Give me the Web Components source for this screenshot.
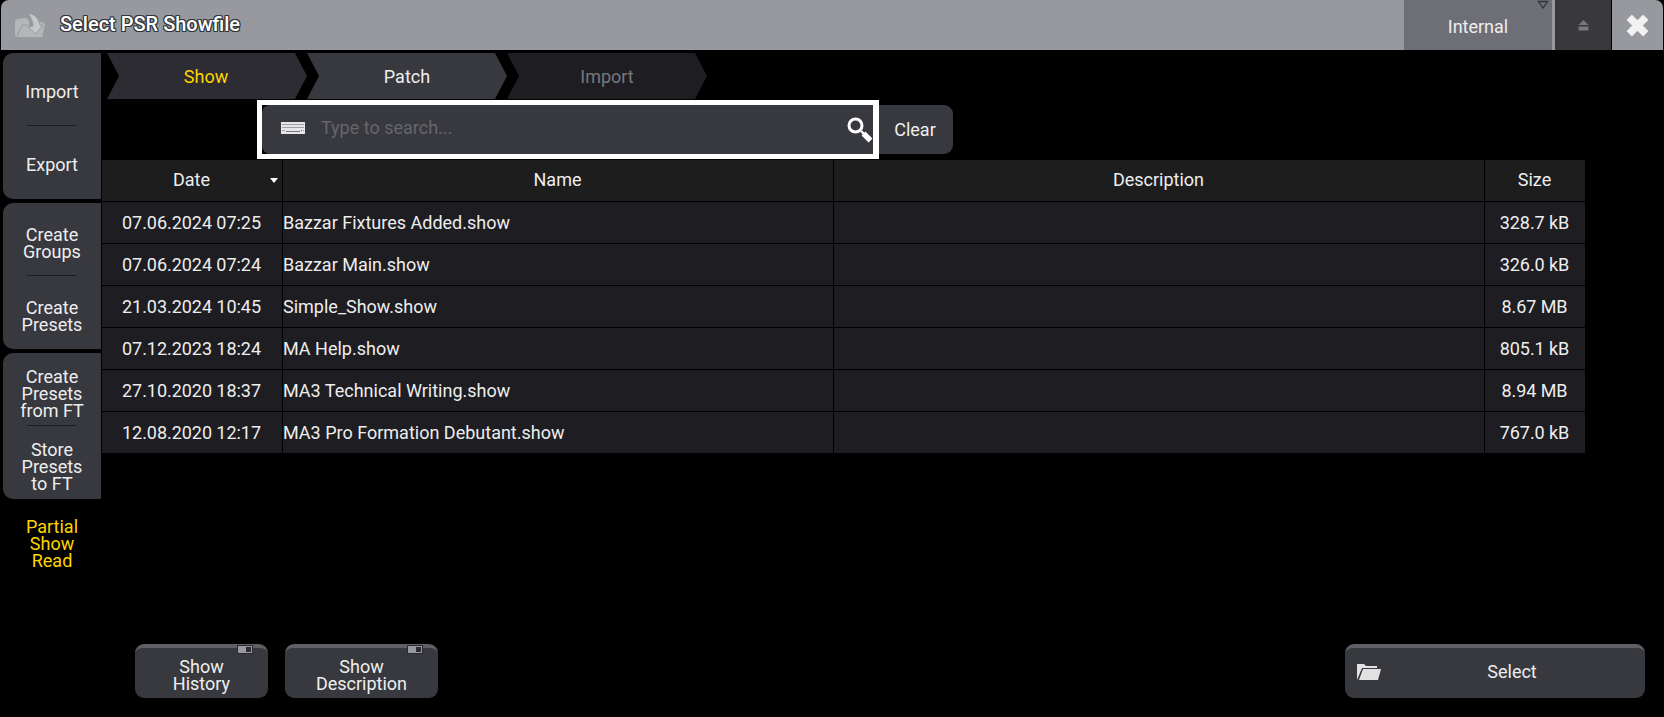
<!DOCTYPE html>
<html>
<head>
<meta charset="utf-8">
<title>Select PSR Showfile</title>
<style>
    html, body { margin: 0; background: #000; }
    body { font-family: Roboto, "Liberation Sans", sans-serif; font-size: 18px; color: #eee; }
</style>
</head>
<body>
<show-dialog>
    <title-bar slot="title" heading="Select PSR Showfile" drive="Internal"></title-bar>

    <side-group slot="side" style="--text-drop:4px">
        <side-button>Import</side-button>
        <side-button>Export</side-button>
    </side-group>
    <side-group slot="side" style="--text-drop:7px">
        <side-button>Create<br>Groups</side-button>
        <side-button>Create<br>Presets</side-button>
    </side-group>
    <side-group slot="side" style="--text-drop:7px">
        <side-button>Create<br>Presets<br>from FT</side-button>
        <side-button>Store<br>Presets<br>to FT</side-button>
    </side-group>
    <side-button slot="side" style="color:#ffd400;height:80px">Partial<br>Show<br>Read</side-button>

    <step-bar slot="steps">
        <step-item state="active">Show</step-item>
        <step-item>Patch</step-item>
        <step-item state="off">Import</step-item>
    </step-bar>

    <search-box slot="search"></search-box>
    <file-table slot="table"></file-table>

    <action-button slot="actions" toggle style="width:133px">Show<br>History</action-button>
    <action-button slot="actions" toggle style="width:153px;margin-left:17px">Show<br>Description</action-button>
    <action-button slot="actions" folder style="width:300px;margin-left:auto">Select</action-button>
</show-dialog>

<script>
const dialogTemplate = document.createElement('template');
dialogTemplate.innerHTML = `
<style>
    :host { display: flex; flex-flow: column nowrap; width: 1664px; height: 717px; overflow: hidden; background: #000; }
    .body { display: flex; flex: 1; min-height: 0; padding-top: 3px; }
    .side { display: flex; flex-flow: column nowrap; gap: 4px; width: 98px; margin-left: 3px; flex: none; }
    .main { display: flex; flex-flow: column nowrap; flex: 1; min-width: 0; padding-left: 1px; }
    .steps { display: block; padding-left: 5px; }
    .search { display: block; padding: 1px 0 1px 155px; }
    .actions { display: flex; margin-top: auto; padding: 0 19px 19px 33px; }
</style>
<slot name="title"></slot>
<div class="body">
    <div class="side"><slot name="side"></slot></div>
    <div class="main">
        <div class="steps"><slot name="steps"></slot></div>
        <div class="search"><slot name="search"></slot></div>
        <slot name="table"></slot>
        <div class="actions"><slot name="actions"></slot></div>
    </div>
</div>
`;
class ShowDialog extends HTMLElement {
    constructor() {
        super();
        this.attachShadow({ mode: 'open' }).appendChild(dialogTemplate.content.cloneNode(true));
    }
}
customElements.define('show-dialog', ShowDialog);

const titleTemplate = document.createElement('template');
titleTemplate.innerHTML = `
<style>
    :host { display: flex; align-items: stretch; height: 50px; background: #98999e; border-radius: 8px 8px 0 0; overflow: hidden; flex: none; margin: 0 1px; }
    .icon { width: 30px; height: 24px; margin: 13px 15px 0 14px; flex: none; }
    h1 { flex: 1; margin: 0; font: 500 20px/48px Roboto, sans-serif; color: #fff;
        text-shadow: -1px 0 #33343a, 1px 0 #33343a, 0 -1px #33343a, 0 1px #33343a, -1px -1px #33343a, 1px 1px #33343a, 1px -1px #33343a, -1px 1px #33343a; }
    .drive { position: relative; width: 148px; background: #6e6f76; color: #eee; text-align: center; line-height: 54px; flex: none; }
    .drive svg { position: absolute; right: 3px; top: 0; }
    .eject { width: 56px; margin-left: 3px; background: #38383d; display: flex; align-items: center; justify-content: center; flex: none; border-right: 1px solid #000; }
    .close { width: 51px; display: flex; align-items: center; justify-content: center; flex: none; }
</style>
<svg class="icon" viewBox="0 0 30 24">
    <path d="M0 9 Q0 7 2 6 L11 5 L14 8 V24 H2 Q0 24 0 22 Z" fill="#b5b6b9"/>
    <path d="M22 9 H27 L30 11 L27 24 H7 L11 13 H20 Z" fill="#b5b6b9"/>
    <path d="M2 23 L7 12 H13" fill="none" stroke="#98999e" stroke-width="1"/>
    <path d="M13 0 C19 1 24 5 25 12 L28 12 L21 21 L13 14 L18 13 C18 9 16 4 13 0 Z" fill="#c6c7c9" stroke="#98999e" stroke-width="1"/>
</svg>
<h1></h1>
<div class="drive"><span></span>
    <svg width="12" height="9" viewBox="0 0 12 9"><path d="M1.5 1.5 H10.5 L6 8 Z" fill="none" stroke="#33343a" stroke-width="1.3"/></svg>
</div>
<div class="eject"><svg width="11" height="11" viewBox="0 0 11 11"><path d="M5.5 0 L10.5 5 H.5 Z M.5 6.5 H10.5 V10.5 H.5 Z" fill="#77787d"/></svg></div>
<div class="close"><svg width="27" height="27" viewBox="0 0 24 24"><path d="M3 7 L7 3 L12 8 L17 3 L21 7 L16 12 L21 17 L17 21 L12 16 L7 21 L3 17 L8 12 Z" fill="#f2f2f2" stroke="#f2f2f2" stroke-width="1" stroke-linejoin="round"/></svg></div>
`;
class TitleBar extends HTMLElement {
    constructor() {
        super();
        this.attachShadow({ mode: 'open' }).appendChild(titleTemplate.content.cloneNode(true));
    }
    connectedCallback() {
        this.shadowRoot.querySelector('h1').textContent = this.getAttribute('heading');
        this.shadowRoot.querySelector('.drive span').textContent = this.getAttribute('drive');
    }
}
customElements.define('title-bar', TitleBar);

const groupTemplate = document.createElement('template');
groupTemplate.innerHTML = `
<style>
    :host { display: grid; grid-template-rows: 1fr 1fr; height: 146px; background: #38383f; border-radius: 10px 0 0 10px; flex: none; }
</style>
<slot></slot>
`;
class SideGroup extends HTMLElement {
    constructor() {
        super();
        this.attachShadow({ mode: 'open' }).appendChild(groupTemplate.content.cloneNode(true));
    }
}
customElements.define('side-group', SideGroup);

const sideButtonTemplate = document.createElement('template');
sideButtonTemplate.innerHTML = `
<style>
    :host { box-sizing: border-box; display: flex; align-items: center; justify-content: center; text-align: center; font-size: 18px; line-height: 17px; color: #eee; position: relative; padding-top: var(--text-drop, 0); }
    :host(:first-child)::after { content: ""; position: absolute; left: 24px; right: 25px; bottom: 0; height: 1px; background: #1c1c20; }
</style>
<div><slot></slot></div>
`;
class SideButton extends HTMLElement {
    constructor() {
        super();
        this.attachShadow({ mode: 'open' }).appendChild(sideButtonTemplate.content.cloneNode(true));
    }
}
customElements.define('side-button', SideButton);

const stepBarTemplate = document.createElement('template');
stepBarTemplate.innerHTML = `
<style>
    :host { display: flex; height: 46px; }
</style>
<slot></slot>
`;
class StepBar extends HTMLElement {
    constructor() {
        super();
        this.attachShadow({ mode: 'open' }).appendChild(stepBarTemplate.content.cloneNode(true));
    }
}
customElements.define('step-bar', StepBar);

const stepItemTemplate = document.createElement('template');
stepItemTemplate.innerHTML = `
<style>
    :host { box-sizing: border-box; display: flex; align-items: center; justify-content: center; width: 200px; height: 46px; background: #38383f; color: #eee; font-size: 18px;
        clip-path: polygon(0 0, 188px 0, 200px 23px, 188px 46px, 0 46px, 12px 23px); }
    :host([state="active"]) { background: #2c2c32; color: #ffd400; padding-right: 2px; }
    :host([state="off"]) { background: #1e1e22; color: #77777c; }
</style>
<slot></slot>
`;
class StepItem extends HTMLElement {
    constructor() {
        super();
        this.attachShadow({ mode: 'open' }).appendChild(stepItemTemplate.content.cloneNode(true));
    }
}
customElements.define('step-item', StepItem);

const searchTemplate = document.createElement('template');
searchTemplate.innerHTML = `
<style>
    :host { display: flex; align-items: center; height: 59px; }
    .field { box-sizing: border-box; width: 622px; height: 59px; background: #000; border: 5px solid #fff; border-right-width: 6px; flex: none; }
    .inner { display: flex; align-items: center; height: 100%; background: #38383f; border-radius: 8px 0 0 8px; }
    .kbd { margin: 0 0 3px 19px; flex: none; }
    .hint { margin: 0 0 5px 16px; flex: 1; color: #66666b; font-size: 18px; }
    .glass { margin: 0; flex: none; }
    .clear { display: flex; align-items: center; justify-content: center; box-sizing: border-box; width: 74px; height: 49px; padding: 0 2px 1px 0; background: #38383f; border-radius: 0 9px 9px 0; color: #eee; font-size: 18px; flex: none; }
</style>
<div class="field"><div class="inner">
    <svg class="kbd" width="24" height="12" viewBox="0 0 24 12">
        <rect width="24" height="12" fill="#e6e6e6"/>
        <path d="M1.5 2.5 H22.5 M1.5 5.5 H22.5" stroke="#5a5a60" stroke-width="1" stroke-dasharray="1 1"/>
        <path d="M1.5 8.5 H4 M20 8.5 H22.5" stroke="#5a5a60" stroke-width="1" stroke-dasharray="1 1"/>
        <path d="M5 9.5 H19" stroke="#77777c" stroke-width="1"/>
    </svg>
    <span class="hint">Type to search...</span>
    <svg class="glass" width="26" height="26" viewBox="0 0 26 26">
        <circle cx="8.5" cy="8.5" r="6.5" fill="none" stroke="#fff" stroke-width="3"/>
        <path d="M14 14 L17 17" stroke="#fff" stroke-width="2.4"/>
        <path d="M16.5 16.5 L23.5 23.5" stroke="#fff" stroke-width="5.5"/>
    </svg>
</div></div>
<div class="clear">Clear</div>
`;
class SearchBox extends HTMLElement {
    constructor() {
        super();
        this.attachShadow({ mode: 'open' }).appendChild(searchTemplate.content.cloneNode(true));
    }
}
customElements.define('search-box', SearchBox);

const files = [
    ['07.06.2024 07:25', 'Bazzar Fixtures Added.show', '328.7 kB'],
    ['07.06.2024 07:24', 'Bazzar Main.show', '326.0 kB'],
    ['21.03.2024 10:45', 'Simple_Show.show', '8.67 MB'],
    ['07.12.2023 18:24', 'MA Help.show', '805.1 kB'],
    ['27.10.2020 18:37', 'MA3 Technical Writing.show', '8.94 MB'],
    ['12.08.2020 12:17', 'MA3 Pro Formation Debutant.show', '767.0 kB'],
];

const tableTemplate = document.createElement('template');
tableTemplate.innerHTML = `
<style>
    :host { display: grid; grid-template-columns: 180px 550px 650px 100px; grid-auto-rows: 41px; row-gap: 1px; column-gap: 1px; width: 1483px; font-size: 18px; color: #eee; flex: none; }
    .head { display: flex; align-items: center; justify-content: center; position: relative; background: #1d1d1d; padding: 0 1px 2px 0; }
    .head svg { position: absolute; right: 3px; top: 17px; }
    .cell { display: flex; align-items: center; background: #1d1d22; padding-bottom: 1px; }
    .when { justify-content: center; letter-spacing: -0.05px; padding-right: 1px; }
    .size { justify-content: center; padding-right: 1px; letter-spacing: -0.06px; }
</style>
<div class="head">Date<svg width="10" height="7" viewBox="0 0 10 7"><path d="M1 1 H9 L5 6 Z" fill="#fff"/></svg></div>
<div class="head">Name</div>
<div class="head">Description</div>
<div class="head">Size</div>
`;
class FileTable extends HTMLElement {
    constructor() {
        super();
        this.attachShadow({ mode: 'open' }).appendChild(tableTemplate.content.cloneNode(true));
    }
    connectedCallback() {
        if (this.shadowRoot.querySelector('.cell')) return;
        for (const [when, name, size] of files) {
            this._addCell('when', when);
            this._addCell('name', name);
            this._addCell('desc', '');
            this._addCell('size', size);
        }
    }
    _addCell(kind, text) {
        const cell = document.createElement('div');
        cell.className = 'cell ' + kind;
        cell.textContent = text;
        this.shadowRoot.appendChild(cell);
    }
}
customElements.define('file-table', FileTable);

const actionTemplate = document.createElement('template');
actionTemplate.innerHTML = `
<style>
    :host { box-sizing: border-box; display: flex; align-items: center; justify-content: center; position: relative; height: 54px; padding-top: 4px; background: #38383f; border-top: 4px solid #5f6066; border-radius: 9px; text-align: center; font-size: 18px; line-height: 17px; color: #eee; flex: none; }
    :host([folder]) { padding: 0 0 4px 34px; }
    .toggle { box-sizing: border-box; position: absolute; right: 15px; top: -3px; width: 16px; height: 9px; border: 1px solid #2a2a2e; background: linear-gradient(#2c2c32, #2c2c32) no-repeat 8px 1px / 5px 5px, #98999e; }
    .folder { position: absolute; left: 12px; top: 15px; }
    .label { display: block; }
</style>
<span class="label"><slot></slot></span>
`;
class ActionButton extends HTMLElement {
    constructor() {
        super();
        this.attachShadow({ mode: 'open' }).appendChild(actionTemplate.content.cloneNode(true));
    }
    connectedCallback() {
        if (this.hasAttribute('toggle')) {
            const t = document.createElement('span');
            t.className = 'toggle';
            this.shadowRoot.appendChild(t);
        }
        if (this.hasAttribute('folder')) {
            const f = document.createElementNS('http://www.w3.org/2000/svg', 'svg');
            f.setAttribute('class', 'folder');
            f.setAttribute('width', '24');
            f.setAttribute('height', '17');
            f.setAttribute('viewBox', '0 0 24 17');
            f.innerHTML = '<path d="M0 17 V1 H7 L9 3 H20 V5 H5 Z" fill="#e2e2e2"/><path d="M6 6 H24 L21 17 H2 Z" fill="#e2e2e2"/>';
            this.shadowRoot.appendChild(f);
        }
    }
}
customElements.define('action-button', ActionButton);
</script>
</body>
</html>
